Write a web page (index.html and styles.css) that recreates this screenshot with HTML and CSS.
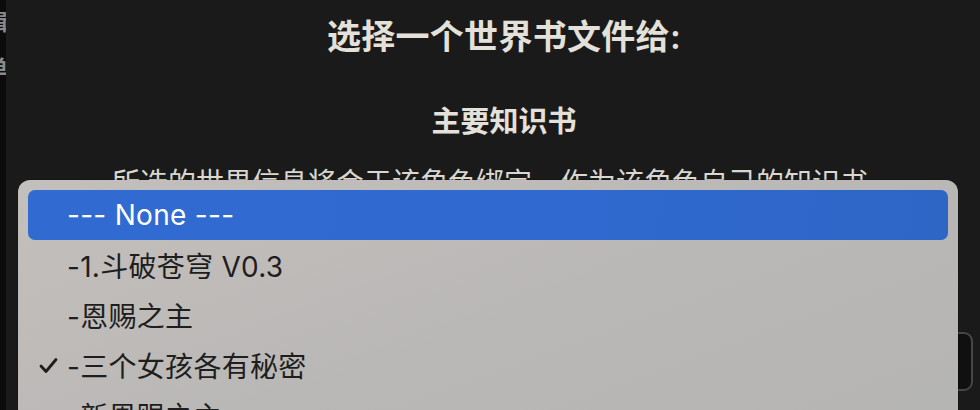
FILE: index.html
```html
<!DOCTYPE html>
<html lang="zh-CN">
<head>
<meta charset="utf-8">
<title>选择世界书</title>
<link rel="stylesheet" href="styles.css">
</head>
<body>
<div class="page">
  <aside class="strip">
    <span class="strip-text">编辑</span>
    <span class="strip-text">菜单</span>
  </aside>
  <main class="main">
    <h2 class="title">选择一个世界书文件给:</h2>
    <h3 class="subtitle">主要知识书</h3>
    <p class="desc">所选的世界信息将会于该角色绑定，作为该角色自己的知识书。</p>
    <div class="select-box">
      <svg class="select-arrow" width="14" height="10" viewBox="0 0 14 10"><polyline points="2,3 7,7 12,3" fill="none" stroke="#8a8a8a" stroke-width="1.6" stroke-linecap="round" stroke-linejoin="round"/></svg>
    </div>
  </main>
  <div class="menu">
    <div class="item item-active"><span class="check"></span><span class="label">--- None ---</span></div>
    <div class="item"><span class="check"></span><span class="label">-1.斗破苍穹 V0.3</span></div>
    <div class="item"><span class="check"></span><span class="label">-恩赐之主</span></div>
    <div class="item"><span class="check"><svg width="19" height="17" viewBox="0 0 19 17"><polyline points="2,9 7,14.5 17,2.5" fill="none" stroke="#1e1e1e" stroke-width="2.8" stroke-linecap="round" stroke-linejoin="round"/></svg></span><span class="label">-三个女孩各有秘密</span></div>
    <div class="item"><span class="check"></span><span class="label">-新恩赐之主</span></div>
  </div>
</div>
</body>
</html>
```

FILE: styles.css
```css
html, body {
  margin: 0;
  padding: 0;
  background: #1a1a1a;
  overflow: hidden;
}

.page {
  position: relative;
  display: flex;
  width: 980px;
  height: 410px;
  font-family: Inter, "Noto Sans CJK SC", sans-serif;
}

.strip {
  width: 6px;
  flex: none;
  background: #0b0b0b;
  overflow: hidden;
  display: flex;
  flex-direction: column;
  align-items: flex-end;
  padding-top: 8px;
  gap: 18px;
}

.strip-text {
  display: flex;
  justify-content: flex-end;
  width: 6px;
  white-space: nowrap;
  font-size: 22px;
  line-height: 28px;
  color: #8a8a8a;
  font-weight: 600;
  transform: translateX(2px);
}

.main {
  flex: 1;
  display: flex;
  flex-direction: column;
  align-items: stretch;
  padding: 15px 0 0 22px;
  color: #e3e1d9;
  text-align: center;
}

.title {
  margin: 0;
  font-size: 34px;
  line-height: 44px;
  font-weight: 600;
  letter-spacing: 0.3px;
}

.subtitle {
  margin: 43px 0 0;
  font-size: 29px;
  line-height: 40px;
  font-weight: 600;
}

.desc {
  margin: 21px 0 0;
  font-size: 28px;
  line-height: 40px;
  font-weight: 400;
  color: #d9d7d0;
  white-space: nowrap;
}

.select-box {
  margin: 129px 7px 0 0;
  height: 55px;
  border: 2px solid #464646;
  border-radius: 9px;
  background: #101010;
  display: flex;
  align-items: center;
  justify-content: flex-end;
  padding: 0 12px;
}

.select-arrow {
  display: block;
}

.menu {
  position: absolute;
  left: 18px;
  top: 180px;
  width: 920px;
  height: 260px;
  padding: 10px;
  border-radius: 12px;
  background: linear-gradient(160deg, #c3bfbd 0%, #bab8b6 50%, #b4b4b2 100%);
  box-shadow: 0 0 0 0.5px rgba(0, 0, 0, 0.3);
}

.item {
  display: flex;
  align-items: center;
  height: 50px;
  border-radius: 7px;
  color: #1e1e1e;
  font-size: 28px;
}

.item-active {
  background: linear-gradient(100deg, #316bd2 0%, #3069cf 60%, #2e66c6 100%);
  color: #ffffff;
}

.check {
  width: 39px;
  flex: none;
  display: flex;
  justify-content: flex-end;
  padding-right: 9px;
  box-sizing: border-box;
}

.check svg {
  display: block;
}

.label {
  white-space: nowrap;
  letter-spacing: 0.3px;
}
```
